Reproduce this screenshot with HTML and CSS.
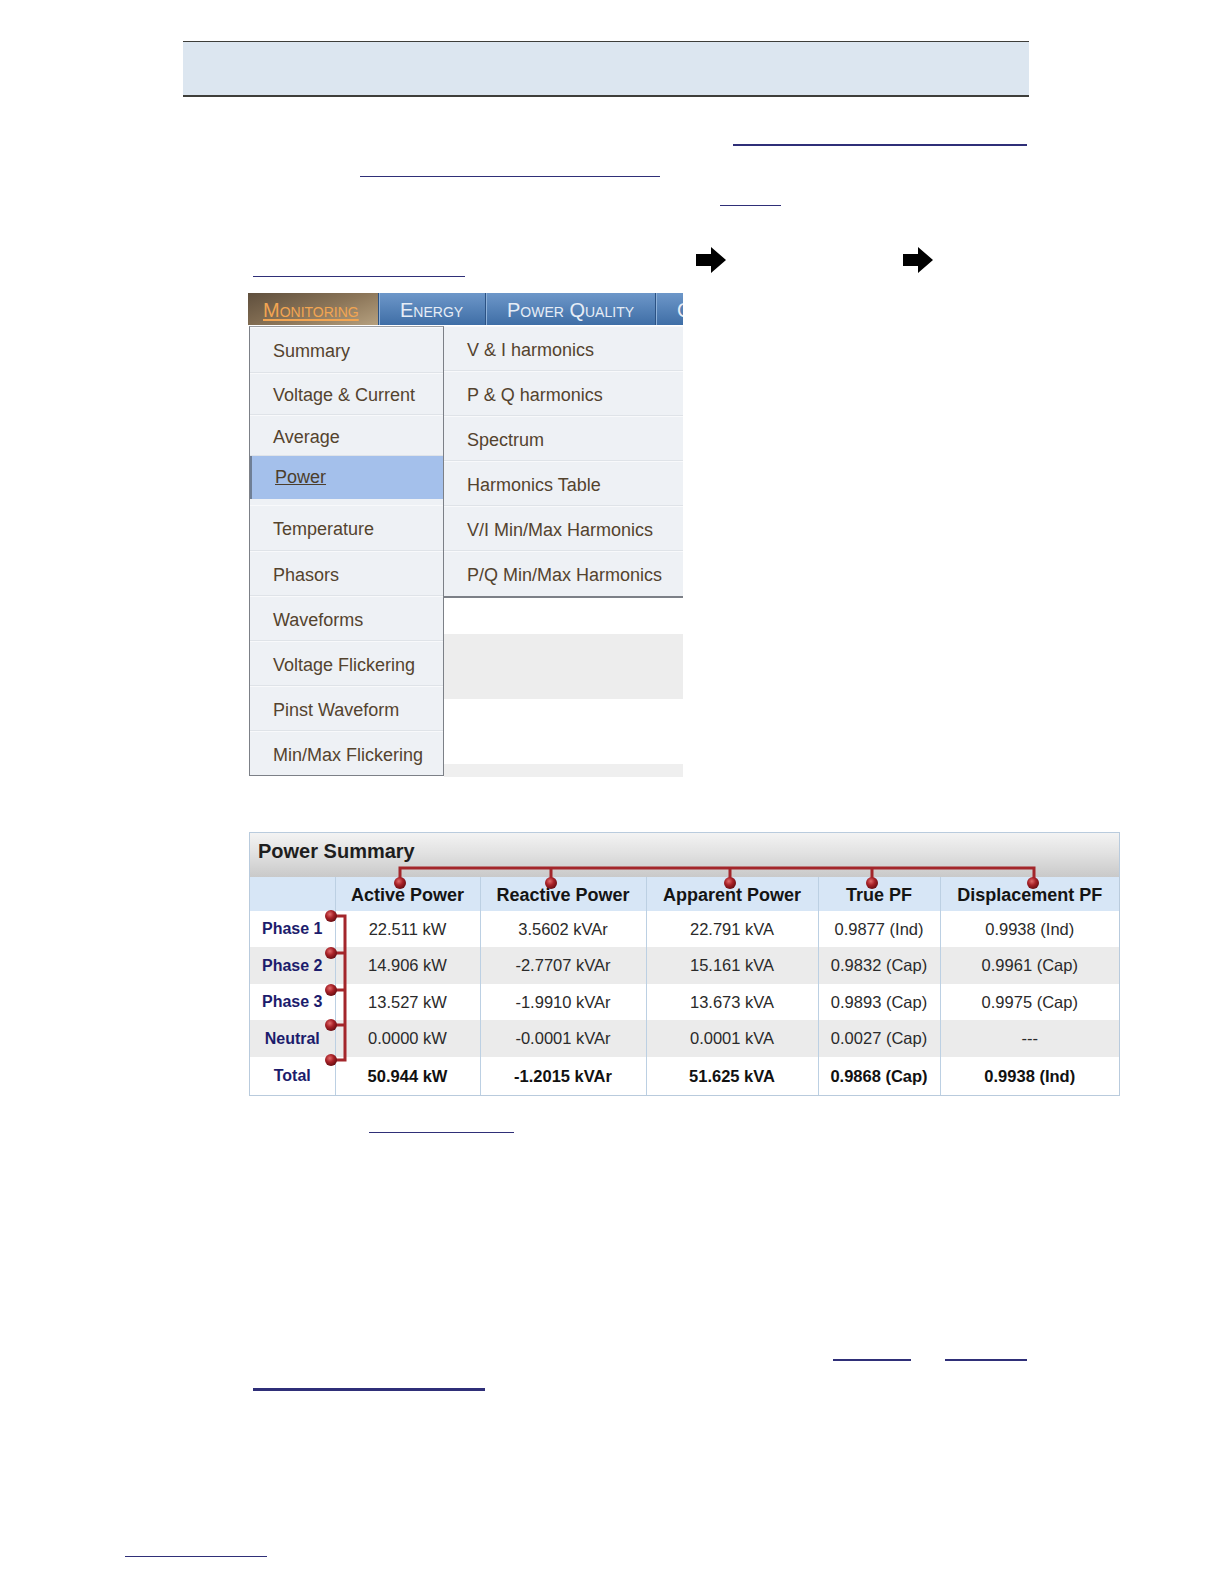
FILE: index.html
```html
<!DOCTYPE html>
<html lang="en">
<head>
    <meta charset="UTF-8">
    <title>Monitoring - Power Summary</title>
    <link rel="stylesheet" href="styles.css">
</head>
<body>
<div class="page">
    <div class="header-band"></div>

    <div class="row row-1"><span class="ul ul-a"></span></div>
    <div class="row row-2"><span class="ul ul-b thin"></span></div>
    <div class="row row-3"><span class="ul ul-c thin"></span></div>
    <div class="row row-4">
        <span class="ul ul-d thin"></span>
        <svg class="arrow arrow-1" width="32" height="28" viewBox="0 0 32 28"><path d="M1 8 H16 V1 L31 14 L16 27 V20 H1 Z" fill="#000"/></svg>
        <svg class="arrow arrow-2" width="32" height="28" viewBox="0 0 32 28"><path d="M1 8 H16 V1 L31 14 L16 27 V20 H1 Z" fill="#000"/></svg>
    </div>

    <!-- menu screenshot -->
    <div class="menu-shot">
        <div class="tabs">
            <div class="tab tab-active"><span>Monitoring</span></div>
            <div class="tab tab-energy">Energy</div>
            <div class="tab tab-pq">Power Quality</div>
            <div class="tab tab-more">C</div>
        </div>
        <div class="menu-body">
            <ul class="main-menu">
                <li class="menu-item h46">Summary</li>
                <li class="menu-item h42">Voltage &amp; Current</li>
                <li class="menu-item h41">Average</li>
                <li class="menu-item selected"><span>Power</span></li>
                <li class="menu-item h46">Temperature</li>
                <li class="menu-item">Phasors</li>
                <li class="menu-item">Waveforms</li>
                <li class="menu-item">Voltage Flickering</li>
                <li class="menu-item">Pinst Waveform</li>
                <li class="menu-item last">Min/Max Flickering</li>
            </ul>
            <div class="sub-col">
                <ul class="sub-menu">
                    <li class="menu-item">V &amp; I harmonics</li>
                    <li class="menu-item">P &amp; Q harmonics</li>
                    <li class="menu-item">Spectrum</li>
                    <li class="menu-item">Harmonics Table</li>
                    <li class="menu-item">V/I Min/Max Harmonics</li>
                    <li class="menu-item last">P/Q Min/Max Harmonics</li>
                </ul>
                <div class="bg-band white-a"></div>
                <div class="bg-band grey-a"></div>
                <div class="bg-band white-b"></div>
                <div class="bg-band grey-b"></div>
            </div>
        </div>
    </div>

    <!-- power summary screenshot -->
    <div class="summary">
        <div class="summary-title">Power Summary</div>
        <table class="summary-table">
            <colgroup>
                <col class="c-label"><col class="c-active"><col class="c-reactive">
                <col class="c-apparent"><col class="c-true"><col class="c-disp">
            </colgroup>
            <thead>
                <tr>
                    <th></th>
                    <th>Active Power</th>
                    <th>Reactive Power</th>
                    <th>Apparent Power</th>
                    <th>True PF</th>
                    <th>Displacement PF</th>
                </tr>
            </thead>
            <tbody>
                <tr class="r36">
                    <td class="label">Phase 1</td><td>22.511 kW</td><td>3.5602 kVAr</td><td>22.791 kVA</td><td>0.9877 (Ind)</td><td>0.9938 (Ind)</td>
                </tr>
                <tr class="r37 alt">
                    <td class="label">Phase 2</td><td>14.906 kW</td><td>-2.7707 kVAr</td><td>15.161 kVA</td><td>0.9832 (Cap)</td><td>0.9961 (Cap)</td>
                </tr>
                <tr class="r36">
                    <td class="label">Phase 3</td><td>13.527 kW</td><td>-1.9910 kVAr</td><td>13.673 kVA</td><td>0.9893 (Cap)</td><td>0.9975 (Cap)</td>
                </tr>
                <tr class="r37 alt">
                    <td class="label">Neutral</td><td>0.0000 kW</td><td>-0.0001 kVAr</td><td>0.0001 kVA</td><td>0.0027 (Cap)</td><td>---</td>
                </tr>
                <tr class="r38 total">
                    <td class="label">Total</td><td>50.944 kW</td><td>-1.2015 kVAr</td><td>51.625 kVA</td><td>0.9868 (Cap)</td><td>0.9938 (Ind)</td>
                </tr>
            </tbody>
        </table>

        <!-- red callout brackets over the table -->
        <svg class="brackets" width="871" height="264" viewBox="0 0 871 264">
            <defs>
                <radialGradient id="ball" cx="40%" cy="35%" r="65%">
                    <stop offset="0" stop-color="#e06a6a"/>
                    <stop offset="0.5" stop-color="#a82228"/>
                    <stop offset="1" stop-color="#6a0e12"/>
                </radialGradient>
            </defs>
            <g stroke="#a3262b" stroke-width="3" fill="none">
                <path d="M151 50 V36 H785 V50"/>
                <path d="M302 36 V50 M481 36 V50 M623 36 V50"/>
                <path d="M82 84 H96 V228 H82"/>
                <path d="M82 121 H96 M82 158 H96 M82 193 H96"/>
            </g>
            <g fill="url(#ball)">
                <circle cx="151" cy="51" r="6"/>
                <circle cx="302" cy="51" r="6"/>
                <circle cx="481" cy="51" r="6"/>
                <circle cx="623" cy="51" r="6"/>
                <circle cx="784" cy="51" r="6"/>
                <circle cx="82" cy="84" r="6"/>
                <circle cx="82" cy="121" r="6"/>
                <circle cx="82" cy="158" r="6"/>
                <circle cx="82" cy="193" r="6"/>
                <circle cx="82" cy="228" r="6"/>
            </g>
        </svg>
    </div>

    <div class="row row-5"><span class="ul ul-e thin"></span></div>
    <div class="row row-6"><span class="ul ul-f"></span><span class="ul ul-g"></span></div>
    <div class="row row-7"><span class="ul ul-h thick"></span></div>
    <div class="row row-8"><span class="ul ul-i thin"></span></div>
</div>
</body>
</html>
```

FILE: styles.css
```css
body {
    margin: 0;
    background: #fff;
    font-family: "Liberation Sans", Arial, sans-serif;
}
.page {
    padding-top: 41px;
}
.header-band {
    margin-left: 183px;
    width: 846px;
    height: 53px;
    background: #dce6f0;
    border-top: 1px solid #3e3e3a;
    border-bottom: 2px solid #3e3e3a;
}

/* underlined links whose text is not shown */
.row {
    display: flex;
    align-items: flex-end;
}
.ul {
    display: block;
    height: 2px;
    background: #2f2f78;
}
.ul.thin {
    height: 1.5px;
}
.ul.thick {
    height: 3px;
}
.row-1 { height: 49px; }
.row-2 { height: 31px; }
.row-3 { height: 29px; }
.row-4 { height: 71px; }
.row-5 { height: 37px; }
.row-6 { height: 228px; }
.row-7 { height: 30px; }
.row-8 { height: 166px; }
.ul-a { margin-left: 733px; width: 294px; }
.ul-b { margin-left: 360px; width: 300px; }
.ul-c { margin-left: 720px; width: 61px; }
.ul-d { margin-left: 253px; width: 212px; }
.ul-e { margin-left: 369px; width: 145px; }
.ul-f { margin-left: 833px; width: 78px; }
.ul-g { margin-left: 34px; width: 82px; }
.ul-h { margin-left: 253px; width: 232px; }
.ul-i { margin-left: 125px; width: 142px; }
.arrow {
    display: block;
    margin-bottom: 3px;
    filter: blur(0.4px);
}
.arrow-1 { margin-left: 230px; }
.arrow-2 { margin-left: 175px; }

/* menu screenshot */
.menu-shot {
    margin: 16px 0 0 248px;
    width: 435px;
    height: 484px;
    overflow: hidden;
    background: #fff;
}
.tabs {
    display: flex;
    width: 435px;
    height: 32px;
    overflow: hidden;
}
.tab {
    flex: none;
    box-sizing: border-box;
    height: 32px;
    line-height: 34px;
    padding-left: 21px;
    font-size: 20px;
    font-variant: small-caps;
    color: #e6edf6;
    background: linear-gradient(#6d97c9, #3f6ea6);
    border-left: 1px solid #2c5283;
    box-shadow: inset 1px 0 0 #8fb2da;
    white-space: nowrap;
}
.tab-active {
    width: 130px;
    padding-left: 15px;
    border-left: none;
    box-shadow: none;
    background: linear-gradient(160deg, #5f4f3d 0%, #8c7659 55%, #b5a07f 100%);
    color: #f2a552;
}
.tab-active span {
    text-decoration: underline;
    text-underline-offset: 2px;
}
.tab-energy { width: 107px; }
.tab-pq { width: 170px; }
.tab-more { width: 28px; }

.menu-body {
    display: flex;
    align-items: flex-start;
}
.main-menu,
.sub-menu {
    list-style: none;
    margin: 0;
    padding: 0;
    background: #eef1f5;
}
.main-menu {
    box-sizing: border-box;
    width: 195px;
    margin-top: 1px;
    margin-left: 1px;
    border: 1px solid #7c8087;
    border-top-color: #9a9da2;
}
.menu-item {
    box-sizing: border-box;
    height: 45px;
    display: flex;
    align-items: center;
    padding-left: 23px;
    padding-top: 4px;
    font-size: 18px;
    color: #54432e;
    border-bottom: 1px solid #dfe3e8;
    box-shadow: inset 0 1px 0 #f8f9fb;
}
.menu-item.last {
    border-bottom: none;
}
.main-menu .menu-item.h46 { height: 46px; }
.main-menu .menu-item.h42 { height: 42px; }
.main-menu .menu-item.h41 { height: 41px; }
.main-menu .menu-item.last { height: 44px; }
.menu-item.selected {
    height: 43px;
    margin-bottom: 6px;
    padding-top: 0;
    background: #a4c0eb;
    border-left: 2px solid #6f7f96;
    border-bottom: none;
    box-shadow: none;
}
.menu-item.selected span {
    text-decoration: underline;
    color: #4c3e2c;
}
.sub-col {
    flex: 1;
}
.sub-menu {
    margin-top: 1px;
    height: 270px;
    border-bottom: 2px solid #7c8087;
}
.bg-band.white-a { height: 36px; background: #fff; }
.bg-band.grey-a { height: 65px; background: #ededed; }
.bg-band.white-b { height: 65px; background: #fff; }
.bg-band.grey-b { height: 20px; background: #efefef; }

/* power summary screenshot */
.summary {
    position: relative;
    margin: 55px 0 0 249px;
    width: 871px;
    box-sizing: border-box;
    border: 1px solid #b9cbdd;
}
.summary-title {
    height: 44px;
    padding-left: 8px;
    line-height: 36px;
    font-size: 20px;
    font-weight: bold;
    color: #1e1e1e;
    background: linear-gradient(#f3f3f3, #e2e2e2 45%, #c9c9c9);
}
.summary-table {
    width: 869px;
    border-collapse: collapse;
    table-layout: fixed;
}
.c-label { width: 85px; }
.c-active { width: 145px; }
.c-reactive { width: 166px; }
.c-apparent { width: 172px; }
.c-true { width: 122px; }
.c-disp { width: 179px; }
.summary-table th,
.summary-table td {
    padding: 0;
    text-align: center;
    border-left: 1px solid #bcd0e3;
    white-space: nowrap;
}
.summary-table th:first-child,
.summary-table td:first-child {
    border-left: none;
}
.summary-table th {
    height: 32px;
    padding-top: 2px;
    font-size: 18px;
    font-weight: bold;
    color: #141414;
    background: #d7e6f6;
}
.summary-table td {
    font-size: 16.5px;
    color: #2a2a2a;
    background: #fff;
}
.summary-table tr.alt td {
    background: #ebebeb;
}
.summary-table tr.r36 td { height: 36px; }
.summary-table tr.r37 td { height: 37px; }
.summary-table tr.r38 td { height: 38px; }
.summary-table td.label {
    font-size: 16px;
    font-weight: bold;
    color: #1c1c6c;
}
.summary-table tr.total td {
    font-weight: bold;
    color: #111;
}
.summary-table tr.total td.label {
    color: #1c1c6c;
}
.brackets {
    position: absolute;
    left: -1px;
    top: -1px;
    pointer-events: none;
}
```
